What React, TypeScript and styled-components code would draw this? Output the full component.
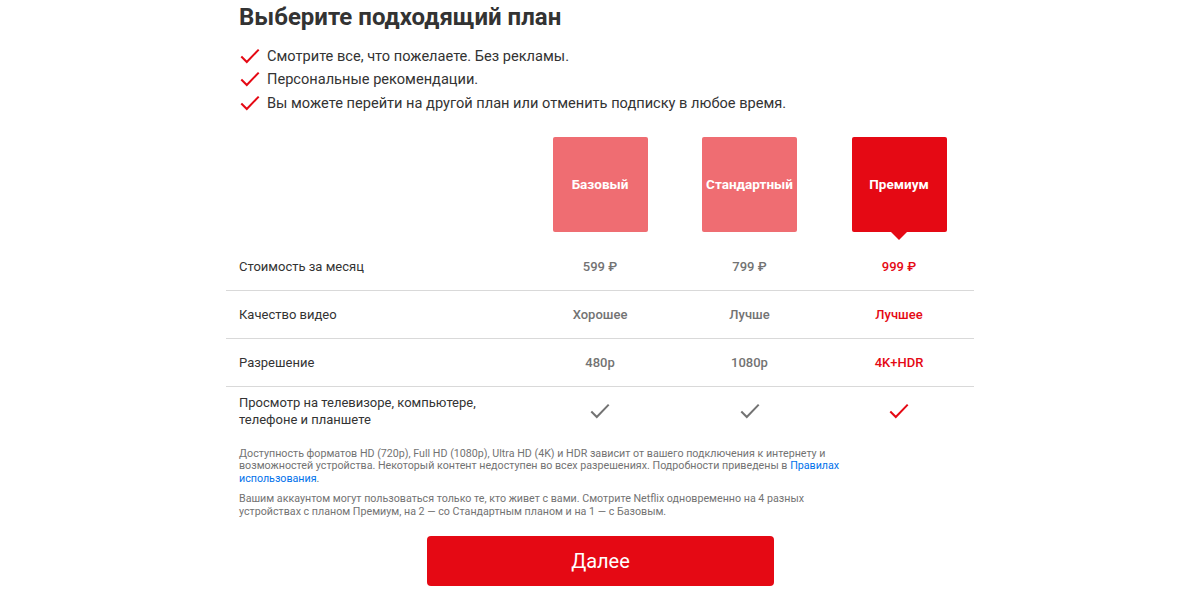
import React from "react";
import styled, { createGlobalStyle } from "styled-components";

const GlobalStyle = createGlobalStyle`
  html, body {
    margin: 0;
    padding: 0;
    background: #fff;
  }
  body {
    font-family: Roboto, "Liberation Sans", Arial, sans-serif;
    color: #333;
  }
  * {
    box-sizing: border-box;
  }
`;

interface Plan {
  name: string;
  price: string;
  quality: string;
  resolution: string;
}

const plans: Plan[] = [
  { name: "Базовый", price: "599 ₽", quality: "Хорошее", resolution: "480p" },
  { name: "Стандартный", price: "799 ₽", quality: "Лучше", resolution: "1080p" },
  { name: "Премиум", price: "999 ₽", quality: "Лучшее", resolution: "4K+HDR" },
];

const SELECTED = 2;

const benefits = [
  "Смотрите все, что пожелаете. Без рекламы.",
  "Персональные рекомендации.",
  "Вы можете перейти на другой план или отменить подписку в любое время.",
];

const CheckIcon: React.FC<{ color: string; size?: number }> = ({ color, size = 20 }) => (
  <svg width={size} height={size} viewBox="0 0 24 24" fill="none">
    <path d="M2.5 12.5 L8.5 18.5 L21.5 5" stroke={color} strokeWidth="2.2" />
  </svg>
);

const App: React.FC = () => {
  return (
    <>
      <GlobalStyle />
      <Page>
        <Container>
          <Title>Выберите подходящий план</Title>
          <Benefits>
            {benefits.map((b) => (
              <Benefit key={b}>
                <CheckIcon color="#e50914" size={22} />
                <span>{b}</span>
              </Benefit>
            ))}
          </Benefits>

          <Table>
            <HeaderRow>
              <LabelCell />
              {plans.map((p, i) => (
                <HeaderCell key={p.name}>
                  <PlanBox $selected={i === SELECTED}>{p.name}</PlanBox>
                </HeaderCell>
              ))}
            </HeaderRow>
            <Row>
              <LabelCell>Стоимость за месяц</LabelCell>
              {plans.map((p, i) => (
                <ValueCell key={p.name} $selected={i === SELECTED}>{p.price}</ValueCell>
              ))}
            </Row>
            <Row>
              <LabelCell>Качество видео</LabelCell>
              {plans.map((p, i) => (
                <ValueCell key={p.name} $selected={i === SELECTED}>{p.quality}</ValueCell>
              ))}
            </Row>
            <Row>
              <LabelCell>Разрешение</LabelCell>
              {plans.map((p, i) => (
                <ValueCell key={p.name} $selected={i === SELECTED}>{p.resolution}</ValueCell>
              ))}
            </Row>
            <Row $last>
              <LabelCell>
                Просмотр на телевизоре, компьютере,
                <br />
                телефоне и планшете
              </LabelCell>
              {plans.map((p, i) => (
                <ValueCell key={p.name} $selected={i === SELECTED}>
                  <CheckIcon color={i === SELECTED ? "#e50914" : "#737373"} size={22} />
                </ValueCell>
              ))}
            </Row>
          </Table>

          <Note>
            Доступность форматов HD (720p), Full HD (1080p), Ultra HD (4K) и HDR зависит от вашего подключения к интернету и
            <br />
            возможностей устройства. Некоторый контент недоступен во всех разрешениях. Подробности приведены в{" "}
            <NoteLink href="#">
              Правилах
              <br />
              использования
            </NoteLink>
            .
          </Note>
          <Note>
            Вашим аккаунтом могут пользоваться только те, кто живет с вами. Смотрите Netflix одновременно на 4 разных
            <br />
            устройствах с планом Премиум, на 2 — со Стандартным планом и на 1 — с Базовым.
          </Note>

          <ButtonWrap>
            <NextButton>Далее</NextButton>
          </ButtonWrap>
        </Container>
      </Page>
    </>
  );
};

const Page = styled.div`
  width: 1200px;
  height: 592px;
  overflow: hidden;
`;

const Container = styled.div`
  width: 748px;
  margin-left: 226px;
`;

const Title = styled.h1`
  margin: 0 0 0 13px;
  font-size: 24px;
  line-height: 34px;
  font-weight: 700;
  color: #333;
`;

const Benefits = styled.ul`
  list-style: none;
  margin: 10px 0 0 13px;
  padding: 0;
`;

const Benefit = styled.li`
  display: flex;
  align-items: center;
  gap: 6px;
  height: 23.5px;
  font-size: 14.6px;
  color: #333;
  svg {
    flex-shrink: 0;
  }
`;

const Table = styled.div`
  margin-top: 22px;
  display: flex;
  flex-direction: column;
`;

const HeaderRow = styled.div`
  display: grid;
  grid-template-columns: 299px 150px 149px 150px;
  height: 106px;
`;

const Row = styled.div<{ $last?: boolean }>`
  display: grid;
  grid-template-columns: 299px 150px 149px 150px;
  align-items: center;
  height: 48px;
  border-bottom: ${(p) => (p.$last ? "none" : "1px solid #d9d9d9")};
`;

const LabelCell = styled.div`
  padding-left: 13px;
  font-size: 13px;
  line-height: 17px;
  color: #333;
`;

const HeaderCell = styled.div`
  display: flex;
  justify-content: center;
`;

const PlanBox = styled.div<{ $selected?: boolean }>`
  position: relative;
  width: 95px;
  height: 95px;
  border-radius: 2px;
  display: flex;
  align-items: center;
  justify-content: center;
  background: ${(p) => (p.$selected ? "#e50914" : "#ef6d72")};
  color: #fff;
  font-size: 13.5px;
  font-weight: 700;
  white-space: nowrap;
  &::after {
    content: "";
    display: ${(p) => (p.$selected ? "block" : "none")};
    position: absolute;
    left: 50%;
    bottom: -8px;
    transform: translateX(-50%);
    border-left: 8px solid transparent;
    border-right: 8px solid transparent;
    border-top: 8px solid #e50914;
  }
`;

const ValueCell = styled.div<{ $selected?: boolean }>`
  display: flex;
  justify-content: center;
  align-items: center;
  font-size: 13px;
  font-weight: 500;
  color: ${(p) => (p.$selected ? "#e50914" : "#737373")};
`;

const Note = styled.p`
  margin: 13px 0 0 13px;
  font-size: 10.7px;
  line-height: 12.8px;
  color: #737373;
  white-space: nowrap;
  & + & {
    margin-top: 7px;
  }
`;

const NoteLink = styled.a`
  color: #0071eb;
  text-decoration: none;
`;

const ButtonWrap = styled.div`
  display: flex;
  justify-content: center;
  margin-top: 18px;
  margin-left: 1px;
`;

const NextButton = styled.button`
  width: 347px;
  height: 50px;
  border: none;
  border-radius: 4px;
  background: #e50914;
  color: #fff;
  font-family: Roboto, "Liberation Sans", Arial, sans-serif;
  font-size: 20px;
  font-weight: 400;
  cursor: pointer;
`;

export default App;
